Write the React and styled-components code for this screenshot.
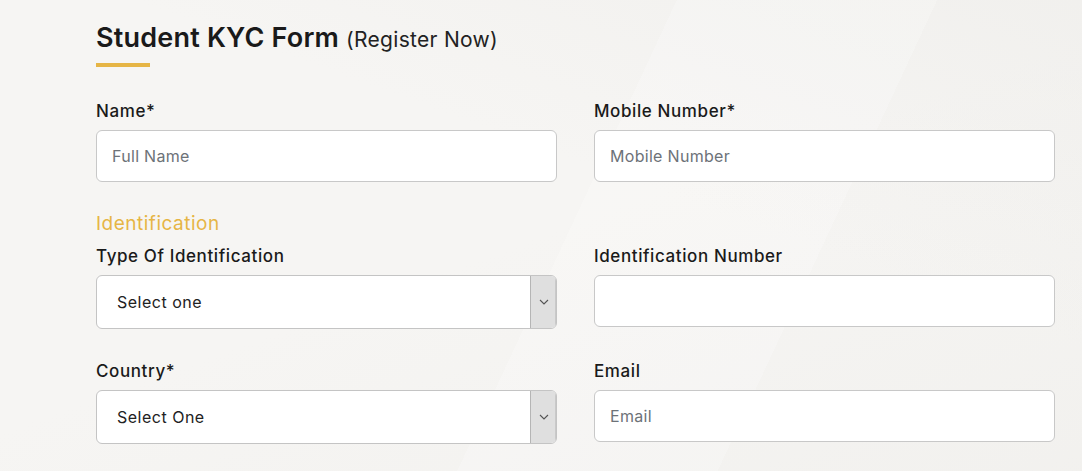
import React from 'react';
import styled, { createGlobalStyle } from 'styled-components';

const GlobalStyle = createGlobalStyle`
  html, body {
    margin: 0;
    padding: 0;
  }
  body {
    font-family: Inter, "Open Sans", sans-serif;
    background: #f6f5f3;
    color: #1c1c1c;
  }
`;

const Page = styled.div`
  width: 1082px;
  height: 471px;
  overflow: hidden;
  box-sizing: border-box;
  padding: 22px 0 0 96px;
  background:
    linear-gradient(115deg, transparent 52%, rgba(255, 255, 255, 0.2) 52%, rgba(255, 255, 255, 0.2) 72%, transparent 72%),
    linear-gradient(200deg, rgba(236, 235, 232, 0.5) 0%, transparent 40%),
    linear-gradient(160deg, transparent 50%, rgba(239, 238, 235, 0.6) 100%),
    #f6f5f3;
`;

const Form = styled.form`
  width: 959px;
`;

const Title = styled.h2`
  margin: 0;
  font-size: 27px;
  line-height: 32px;
  font-weight: 600;
  color: #1a1a1a;
  letter-spacing: 0.2px;
`;

const Sub = styled.span`
  font-size: 21px;
  font-weight: 400;
  color: #222;
  letter-spacing: 0.3px;
`;

const Bar = styled.div`
  width: 54px;
  height: 4px;
  margin-top: 7px;
  background: #e6b545;
`;

const Row = styled.div`
  display: grid;
  grid-template-columns: 461px 461px;
  column-gap: 37px;
  margin-top: ${p => p.$mt}px;
`;

const Field = styled.div`
  display: flex;
  flex-direction: column;
`;

const Label = styled.label`
  font-size: 17px;
  line-height: 24px;
  font-weight: 500;
  letter-spacing: 0.6px;
  color: #1a1a1a;
  margin-bottom: 7px;
`;

const Section = styled.div`
  margin-top: 28px;
  font-size: 19px;
  line-height: 27px;
  font-weight: 400;
  letter-spacing: 0.5px;
  color: #e6b545;
`;

const Input = styled.input`
  box-sizing: border-box;
  width: 100%;
  height: 52px;
  padding: 0 15px;
  border: 1px solid #c8c8c8;
  border-radius: 6px;
  background: #fff;
  font-family: inherit;
  font-size: 16px;
  letter-spacing: 0.3px;
  color: #222;
  outline: none;

  &::placeholder {
    color: #6d7278;
  }
`;

const SelectBox = styled.div`
  box-sizing: border-box;
  display: flex;
  height: 54px;
  border: 1px solid #c4c4c4;
  border-radius: 6px;
  background: #fff;
  overflow: hidden;
`;

const Select = styled.select`
  flex: 1;
  appearance: none;
  border: none;
  background: transparent;
  padding: 0 20px;
  font-family: inherit;
  font-size: 16px;
  letter-spacing: 0.5px;
  color: #222;
  outline: none;
`;

const Arrow = styled.span`
  width: 25px;
  display: flex;
  align-items: center;
  justify-content: center;
  background: #dfdfdf;
  border-left: 1px solid #b5b5b5;
  box-shadow: inset -1px 0 0 #c9c9c9;
`;

const Chevron = () => (
  <svg width="10" height="6" viewBox="0 0 10 6" fill="none">
    <path d="M1 1l4 4 4-4" stroke="#555" strokeWidth="1.1" />
  </svg>
);

const Dropdown = ({ value }) => (
  <SelectBox>
    <Select defaultValue={value}>
      <option>{value}</option>
    </Select>
    <Arrow>
      <Chevron />
    </Arrow>
  </SelectBox>
);

export default function App() {
  return (
    <Page>
      <GlobalStyle />
      <Form onSubmit={e => e.preventDefault()}>
        <Title>
          Student KYC Form <Sub>(Register Now)</Sub>
        </Title>
        <Bar />

        <Row $mt={32}>
          <Field>
            <Label>Name*</Label>
            <Input placeholder="Full Name" />
          </Field>
          <Field>
            <Label>Mobile Number*</Label>
            <Input placeholder="Mobile Number" />
          </Field>
        </Row>

        <Section>Identification</Section>

        <Row $mt={7}>
          <Field>
            <Label>Type Of Identification</Label>
            <Dropdown value="Select one" />
          </Field>
          <Field>
            <Label>Identification Number</Label>
            <Input />
          </Field>
        </Row>

        <Row $mt={30}>
          <Field>
            <Label>Country*</Label>
            <Dropdown value="Select One" />
          </Field>
          <Field>
            <Label>Email</Label>
            <Input placeholder="Email" />
          </Field>
        </Row>
      </Form>
    </Page>
  );
}
